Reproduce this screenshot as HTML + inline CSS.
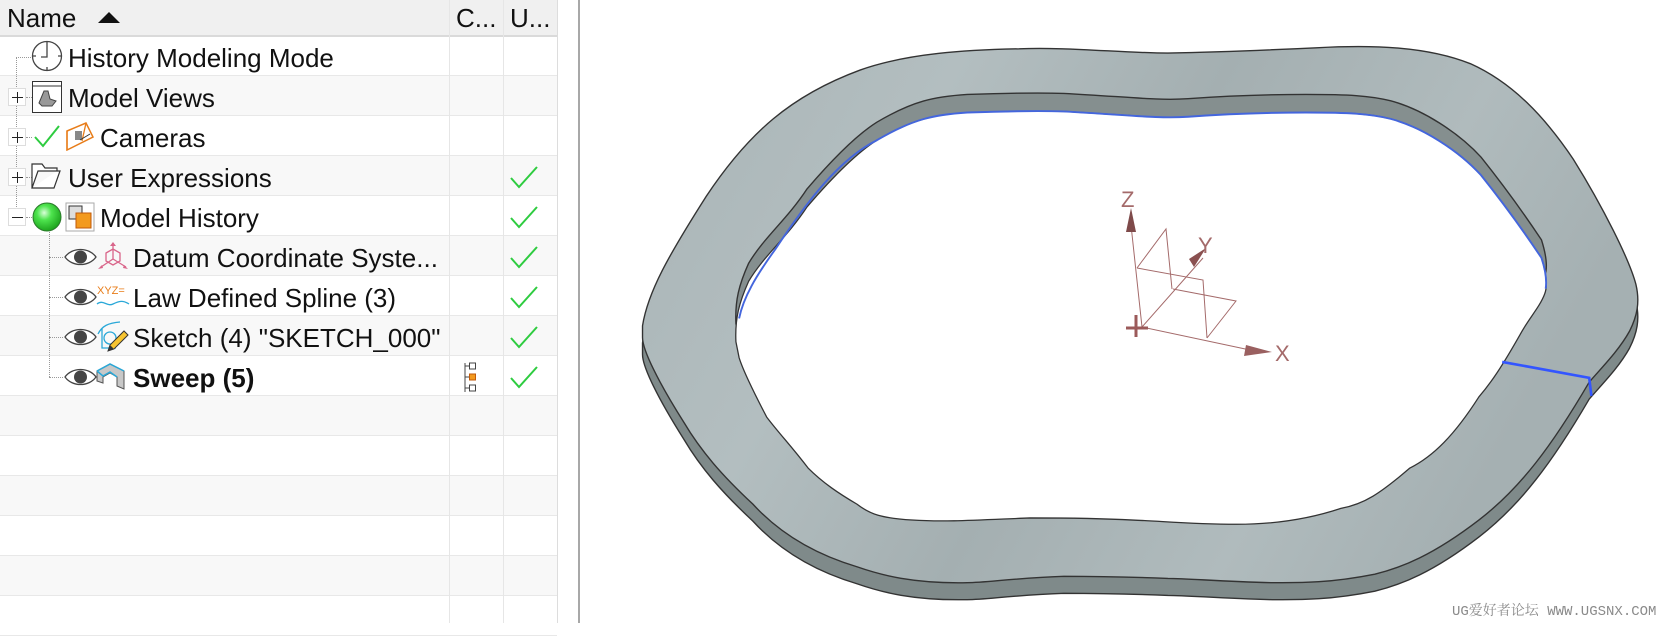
<!DOCTYPE html>
<html><head><meta charset="utf-8">
<style>
*{margin:0;padding:0;box-sizing:border-box}
body{width:1665px;height:623px;background:#fff;position:relative;overflow:hidden;font-family:"Liberation Sans","Noto Sans CJK SC",sans-serif;color:#111}
.hdr{position:absolute;left:0;top:0;width:557px;height:37px;background:#f0f0f0;border-bottom:2px solid #dadada;font-size:26px}
.hdr span{position:absolute;top:3px}
.row{position:absolute;left:0;width:557px;height:40px;border-bottom:1px solid #e8e8e8}
.row.g{background:#f8f8f8}
.vl{position:absolute;top:0;width:1px;height:623px;background:#e6e6e6}
.t{position:absolute;font-size:26px;white-space:nowrap;margin-top:3px}
.ic{position:absolute}
.exp{position:absolute;left:8px;width:18px;height:18px;border:1px solid #ddd;background:#fff}
.exp:before{content:"";position:absolute;left:3px;top:8px;width:11px;height:1px;background:#222}
.exp.p:after{content:"";position:absolute;left:8px;top:3px;width:1px;height:11px;background:#222}
.dotv{position:absolute;width:0;border-left:1px dotted #999}
.doth{position:absolute;height:0;border-top:1px dotted #999}
</style></head><body>

<div class="hdr"><span style="left:7px">Name</span>
<svg class="ic" style="left:98px;top:12px" width="22" height="12"><polygon points="0,11 11,0 22,11" fill="#111"/></svg>
<span style="left:456px">C...</span><span style="left:510px">U...</span></div>

<div class="row" style="top:36px"></div>
<div class="row g" style="top:76px"></div>
<div class="row" style="top:116px"></div>
<div class="row g" style="top:156px"></div>
<div class="row" style="top:196px"></div>
<div class="row g" style="top:236px"></div>
<div class="row" style="top:276px"></div>
<div class="row g" style="top:316px"></div>
<div class="row" style="top:356px"></div>
<div class="row g" style="top:396px"></div>
<div class="row" style="top:436px"></div>
<div class="row g" style="top:476px"></div>
<div class="row" style="top:516px"></div>
<div class="row g" style="top:556px"></div>
<div class="row" style="top:596px"></div>

<div class="vl" style="left:449px;top:0"></div>
<div class="vl" style="left:503px;top:0"></div>
<div class="vl" style="left:557px;top:0;background:#ddd"></div>
<div class="vl" style="left:578px;top:0;width:2px;background:#a8a8a8"></div>

<div class="dotv" style="left:16px;top:57px;height:160px"></div>
<div class="doth" style="left:16px;top:57px;width:15px"></div>
<div class="doth" style="left:26px;top:97px;width:6px"></div>
<div class="doth" style="left:26px;top:137px;width:6px"></div>
<div class="doth" style="left:26px;top:177px;width:6px"></div>
<div class="doth" style="left:26px;top:217px;width:6px"></div>
<div class="dotv" style="left:49px;top:232px;height:145px"></div>
<div class="doth" style="left:49px;top:257px;width:14px"></div>
<div class="doth" style="left:49px;top:297px;width:14px"></div>
<div class="doth" style="left:49px;top:337px;width:14px"></div>
<div class="doth" style="left:49px;top:377px;width:14px"></div>

<div class="exp p" style="top:88px"></div>
<div class="exp p" style="top:128px"></div>
<div class="exp p" style="top:168px"></div>
<div class="exp" style="top:208px"></div>

<svg class="ic" style="left:31px;top:40px" width="32" height="32"><circle cx="16" cy="16" r="14.5" fill="#fff" stroke="#444" stroke-width="1.3"/><path d="M16 5V17H10M16 2v3M16 27v3M2 16h3M27 16h3" stroke="#444" stroke-width="1.3" fill="none"/></svg>
<div class="t" style="left:68px;top:40px">History Modeling Mode</div>
<svg class="ic" style="left:32px;top:81px" width="30" height="32"><rect x="0.5" y="0.5" width="29" height="31" fill="#fff" stroke="#333"/><path d="M0 5h30" stroke="#333"/><path d="M7 22l5-12 4 0 2 8 6 2-4 5-10 0z" fill="#999" stroke="#444"/></svg>
<div class="t" style="left:68px;top:80px">Model Views</div>
<svg class="ic" style="left:34px;top:124px" width="26" height="24"><path d="M1 13l8 9L25 2" stroke="#2ecc40" stroke-width="2" fill="none"/></svg>
<svg class="ic" style="left:66px;top:121px" width="28" height="30"><path d="M1 10L20 2l7 14-26 13z" fill="none" stroke="#e87d1a" stroke-width="1.5"/><path d="M1 10l0 19M20 2l-4 18" stroke="#e87d1a" stroke-width="1.3"/><rect x="9" y="10" width="7" height="9" fill="#888"/><path d="M14 19l10-6" stroke="#333"/></svg>
<div class="t" style="left:100px;top:120px">Cameras</div>
<svg class="ic" style="left:31px;top:163px" width="30" height="26"><path d="M1 25V1h10l3 4h12v3M1 25h22l6-17H7z" fill="#fff" stroke="#333" stroke-width="1.2"/></svg>
<div class="t" style="left:68px;top:160px">User Expressions</div>
<svg class="ic" style="left:32px;top:202px" width="30" height="30"><defs><radialGradient id="gb" cx="0.4" cy="0.35" r="0.65"><stop offset="0" stop-color="#d8ffd8"/><stop offset="0.4" stop-color="#4ee44e"/><stop offset="1" stop-color="#1ea51e"/></radialGradient></defs><circle cx="15" cy="15" r="14" fill="url(#gb)" stroke="#2a7a2a"/></svg>
<svg class="ic" style="left:65px;top:202px" width="30" height="30"><rect x="1" y="1" width="28" height="28" fill="none" stroke="#aaa"/><rect x="4" y="4" width="13" height="13" fill="#ddd" stroke="#333"/><rect x="11" y="11" width="15" height="15" fill="#f39a1e" stroke="#c05a0a"/></svg>
<div class="t" style="left:100px;top:200px">Model History</div>
<svg class="ic" style="left:64px;top:246px" width="33" height="22"><path d="M1 11C8 1 25 1 32 11C25 21 8 21 1 11z" fill="#fff" stroke="#444" stroke-width="1.3"/><circle cx="16.5" cy="11" r="6.5" fill="#444"/></svg>
<svg class="ic" style="left:64px;top:286px" width="33" height="22"><path d="M1 11C8 1 25 1 32 11C25 21 8 21 1 11z" fill="#fff" stroke="#444" stroke-width="1.3"/><circle cx="16.5" cy="11" r="6.5" fill="#444"/></svg>
<svg class="ic" style="left:64px;top:326px" width="33" height="22"><path d="M1 11C8 1 25 1 32 11C25 21 8 21 1 11z" fill="#fff" stroke="#444" stroke-width="1.3"/><circle cx="16.5" cy="11" r="6.5" fill="#444"/></svg>
<svg class="ic" style="left:64px;top:366px" width="33" height="22"><path d="M1 11C8 1 25 1 32 11C25 21 8 21 1 11z" fill="#fff" stroke="#444" stroke-width="1.3"/><circle cx="16.5" cy="11" r="6.5" fill="#444"/></svg>
<svg class="ic" style="left:97px;top:241px" width="32" height="31"><g stroke="#d9658a" stroke-width="1.3" fill="none"><path d="M16 2v16M16 18L4 26M16 18l13 8M9 12l7-4 7 4v8l-7 4-7-4z"/></g><path d="M13 5l3-4 3 4z M1 28l5-1-1-3z M31 28l-5-1 1-3z" fill="#d9658a"/></svg>
<div class="t" style="left:133px;top:240px">Datum Coordinate Syste...</div>
<svg class="ic" style="left:96px;top:283px" width="34" height="28"><text x="1" y="11" font-family="Liberation Sans" font-size="11" fill="#e87d1a">XYZ=</text><path d="M1 21c6-5 10 3 16 0s10-4 16 0" stroke="#2aa8d8" stroke-width="1.3" fill="none"/></svg>
<div class="t" style="left:133px;top:280px">Law Defined Spline (3)</div>
<svg class="ic" style="left:96px;top:320px" width="34" height="34"><path d="M2 14C6 6 12 3 24 2M6 8v20h14" stroke="#2aa8d8" stroke-width="1.3" fill="none"/><circle cx="14" cy="18" r="6" stroke="#2aa8d8" stroke-width="1.3" fill="none"/><path d="M12 31l2-6 14-14 4 4-14 14z" fill="#f6c431" stroke="#333"/><path d="M12 31l2-6 4 4z" fill="#333"/></svg>
<div class="t" style="left:133px;top:320px">Sketch (4) "SKETCH_000"</div>
<svg class="ic" style="left:96px;top:361px" width="34" height="30"><path d="M1 10L14 3l14 7v18l-7-3V16l-7-4-7 4v6L1 20z" fill="#c8c8c8" stroke="#555"/><path d="M1 10l6 5 7-4 7 5" stroke="#2aa8d8" stroke-width="1.5" fill="none"/><path d="M1 10L14 3l14 7" stroke="#2aa8d8" stroke-width="1.5" fill="none"/></svg>
<div class="t" style="left:133px;top:360px;font-weight:bold">Sweep (5)</div>
<svg class="ic" style="left:464px;top:362px" width="14" height="31"><path d="M1 1v29M1 4h4M1 15h4M1 26h4" stroke="#444" fill="none"/><rect x="5.5" y="1" width="6" height="6" fill="#fff" stroke="#444"/><rect x="5.5" y="12" width="6" height="6" fill="#f39a1e" stroke="#c05a0a"/><rect x="5.5" y="23" width="6" height="6" fill="#fff" stroke="#444"/></svg>

<svg class="ic" style="left:510px;top:165px" width="28" height="26"><path d="M1 13l8 9L27 2" stroke="#2ecc40" stroke-width="2" fill="none"/></svg>
<svg class="ic" style="left:510px;top:205px" width="28" height="26"><path d="M1 13l8 9L27 2" stroke="#2ecc40" stroke-width="2" fill="none"/></svg>
<svg class="ic" style="left:510px;top:245px" width="28" height="26"><path d="M1 13l8 9L27 2" stroke="#2ecc40" stroke-width="2" fill="none"/></svg>
<svg class="ic" style="left:510px;top:285px" width="28" height="26"><path d="M1 13l8 9L27 2" stroke="#2ecc40" stroke-width="2" fill="none"/></svg>
<svg class="ic" style="left:510px;top:325px" width="28" height="26"><path d="M1 13l8 9L27 2" stroke="#2ecc40" stroke-width="2" fill="none"/></svg>
<svg class="ic" style="left:510px;top:365px" width="28" height="26"><path d="M1 13l8 9L27 2" stroke="#2ecc40" stroke-width="2" fill="none"/></svg>

<svg class="ic" style="left:0;top:0" width="1665" height="623" viewBox="0 0 1568 587">
<defs>
<linearGradient id="tg" x1="0" y1="0" x2="1" y2="0.3"><stop offset="0" stop-color="#a9b4b6"/><stop offset="0.3" stop-color="#b3bec0"/><stop offset="0.55" stop-color="#a4afb1"/><stop offset="0.8" stop-color="#b0bbbd"/><stop offset="1" stop-color="#a5b0b2"/></linearGradient>
<path id="outer" d="M605 307C610 275 630 240 665 185C705 125 745 90 810 66C855 50 911 47 960 46C1002 44 1060 50 1100 50C1150 49 1198 47 1240 45C1295 42 1345 44 1385 60C1425 78 1455 110 1482 150C1510 195 1535 245 1541 268C1545 285 1542 298 1535 312C1525 330 1510 345 1497 360C1462 420 1432 460 1393 490C1350 523 1320 535 1295 541C1250 550 1220 549 1198 549C1150 548 1120 545 1100 545C1050 543 1020 543 1002 543C950 545 930 549 911 549C860 550 830 542 807 534C760 520 730 498 709 475C680 448 660 425 644 398C620 360 605 330 605 318Z"/>
<path id="inner" d="M693 322C692 300 696 285 705 265C720 240 741 224 760 195C790 160 810 142 826 132C860 112 880 108 911 106C940 105 970 104 1002 105C1060 108 1090 112 1119 110C1160 107 1200 106 1230 106C1270 106 1290 107 1310 112C1340 120 1374 142 1395 165C1419 195 1440 225 1452 243C1458 262 1457 272 1455 277C1450 290 1440 300 1432 315C1415 345 1405 360 1393 374C1370 410 1350 430 1328 441C1300 465 1285 475 1263 479C1230 490 1195 494 1165 494C1120 494 1095 491 1067 490C1030 488 1000 488 970 488C920 490 890 492 859 490C830 488 820 485 807 475C790 465 775 455 761 441C745 420 735 410 722 393C710 370 700 350 696 337Z"/>
</defs>
<use href="#outer" transform="translate(0,16)" fill="#7f8a8a" stroke="#333" stroke-width="1.3"/>
<use href="#outer" fill="url(#tg)" stroke="#333" stroke-width="1.3"/>
<use href="#inner" transform="translate(0,-17)" fill="#858f8f" stroke="#333" stroke-width="1.3"/>
<use href="#inner" fill="#fff" stroke="#333" stroke-width="1.2"/>
<path d="M696 300C700 280 712 260 730 235C760 190 790 150 826 132C860 112 880 108 911 106C940 105 970 104 1002 105C1060 108 1090 112 1119 110C1160 107 1200 106 1230 106C1270 106 1290 107 1310 112C1340 120 1374 142 1395 165C1419 195 1440 225 1452 243C1456 255 1457 265 1456 272" stroke="#4466dd" stroke-width="1.8" fill="none"/>
<path d="M1415 341L1497 356L1499 373" stroke="#3355ff" stroke-width="2.5" fill="none"/>
</svg>

<svg class="ic" style="left:0;top:0" width="1665" height="623">
<g stroke="#a46a6a" stroke-width="1" fill="none">
<path d="M1142 327L1131 225M1142 327L1250 350M1142 327L1203 258"/>
<path d="M1137 268L1166 229L1172 289M1137 268L1203 280L1207 338M1173 289L1236 301L1207 338"/>
</g>
<path d="M1136 337v-22M1126 328h22" stroke="#9b5a5a" stroke-width="3"/>
<path d="M1131 208l-5 24 10 0z" fill="#7e4a4a"/>
<path d="M1272 352l-26-7 -2 11z" fill="#9a6060"/>
<path d="M1206 248l-17 11 5 8z" fill="#8a5050"/>
<g font-family="Liberation Sans" font-size="22" fill="#a46a6a">
<text x="1121" y="207">Z</text><text x="1198" y="253">Y</text><text x="1275" y="361">X</text>
</g>
</svg>

<div style="position:absolute;left:1452px;top:600px;font-family:'Liberation Mono','Noto Serif CJK SC',monospace;font-size:14px;color:#8a8a8a;white-space:nowrap">UG爱好者论坛 WWW.UGSNX.COM</div>
</body></html>
